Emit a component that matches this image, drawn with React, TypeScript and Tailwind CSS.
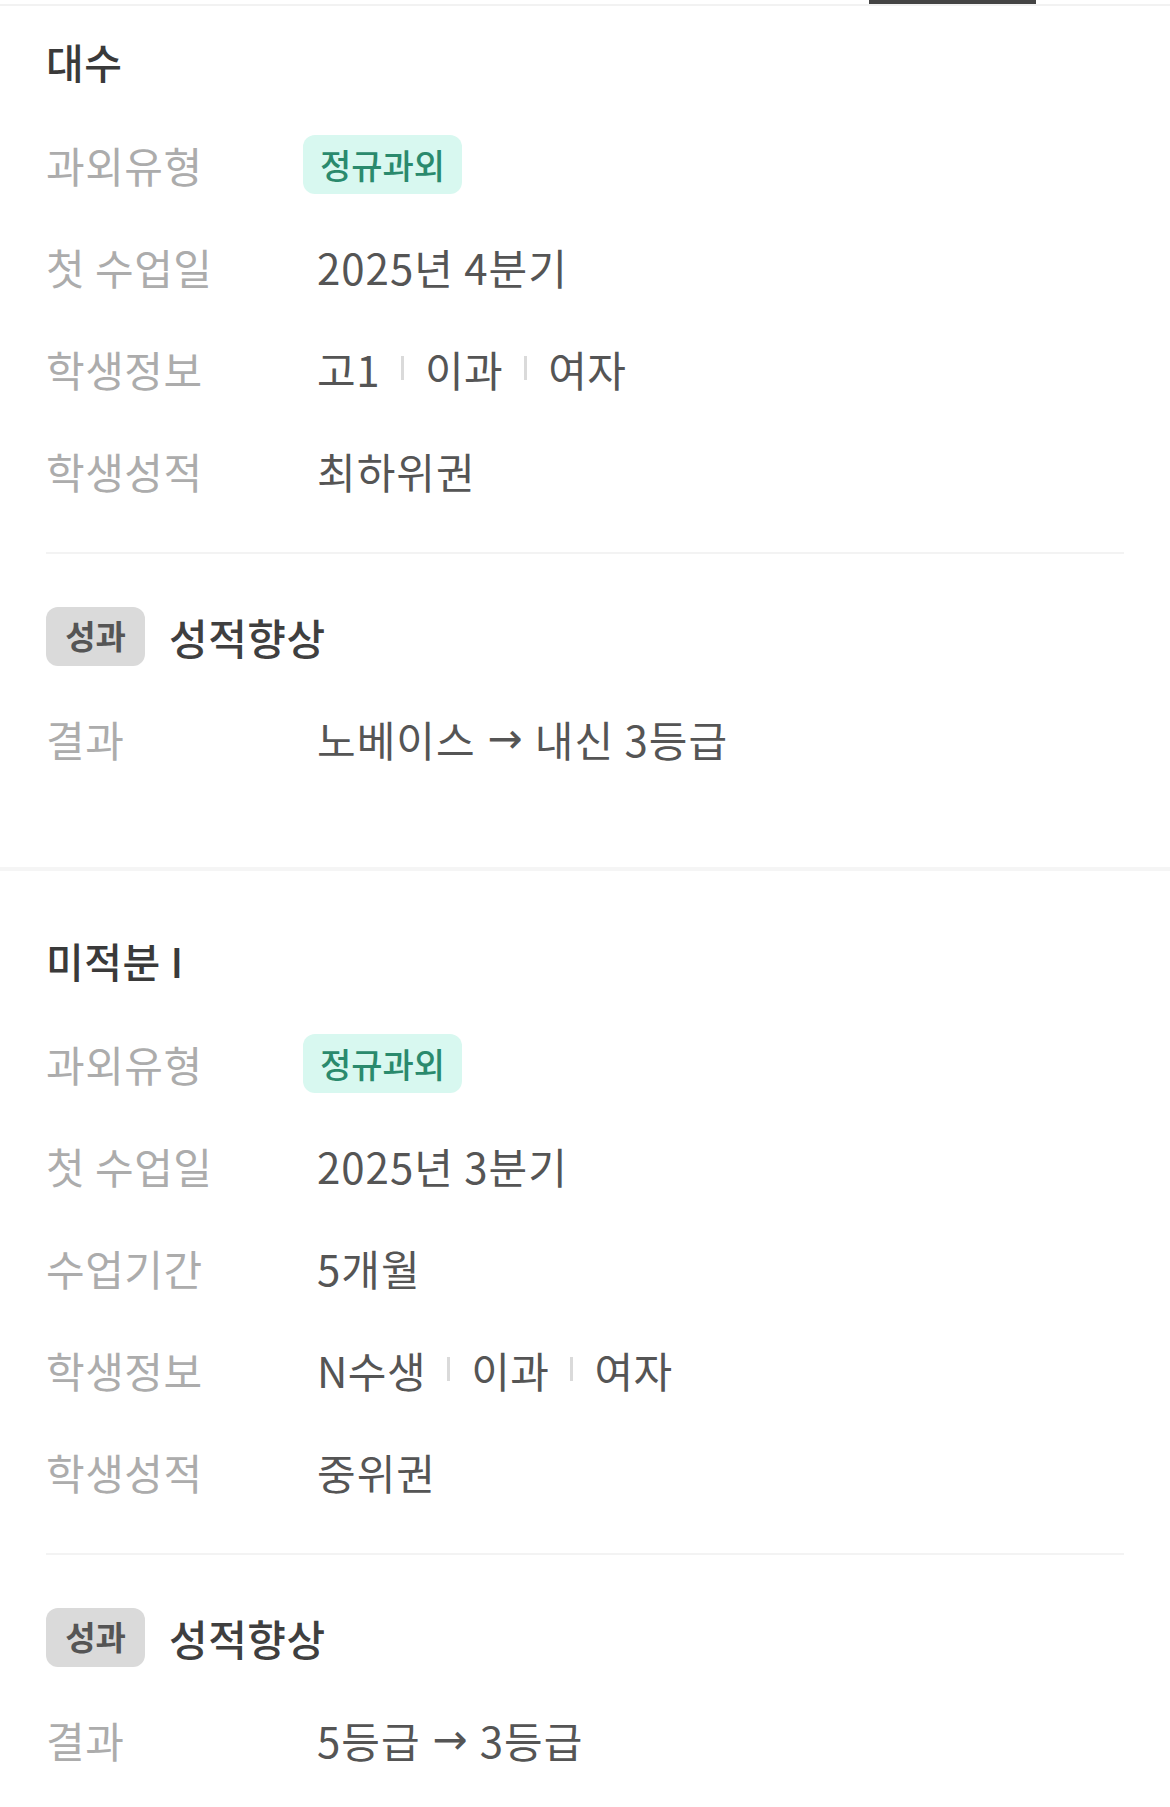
import { Fragment } from 'react';

type Row = { label: string; value?: string; parts?: string[]; badge?: string };

type Lesson = {
  subject: string;
  rows: Row[];
  outcome: string;
  from: string;
  to: string;
};

const lessons: Lesson[] = [
  {
    subject: '대수',
    rows: [
      { label: '과외유형', badge: '정규과외' },
      { label: '첫 수업일', value: '2025년 4분기' },
      { label: '학생정보', parts: ['고1', '이과', '여자'] },
      { label: '학생성적', value: '최하위권' },
    ],
    outcome: '성적향상',
    from: '노베이스',
    to: '내신 3등급',
  },
  {
    subject: '미적분 I',
    rows: [
      { label: '과외유형', badge: '정규과외' },
      { label: '첫 수업일', value: '2025년 3분기' },
      { label: '수업기간', value: '5개월' },
      { label: '학생정보', parts: ['N수생', '이과', '여자'] },
      { label: '학생성적', value: '중위권' },
    ],
    outcome: '성적향상',
    from: '5등급',
    to: '3등급',
  },
];

function InfoRow({ row }: { row: Row }) {
  return (
    <div className="flex h-[102px] items-center">
      <div className="w-[271px] shrink-0 text-[42px] tracking-[0.5px] text-[#acacac]">{row.label}</div>
      {row.badge && (
        <span className="ml-[-14px] flex h-[59px] items-center rounded-[12px] bg-[#d8f8f0] px-[17px] text-[34px] font-medium text-[#2a8a6d]">
          {row.badge}
        </span>
      )}
      {row.value && <div className="text-[42px] tracking-[1px] text-[#555555]">{row.value}</div>}
      {row.parts && (
        <div className="flex items-center text-[42px] tracking-[0.5px] text-[#555555]">
          {row.parts.map((p, i) => (
            <Fragment key={p}>
              {i > 0 && <span className="mx-[21px] h-[24px] w-[3px] bg-[#dadada]" />}
              <span>{p}</span>
            </Fragment>
          ))}
        </div>
      )}
    </div>
  );
}

function LessonCard({ lesson }: { lesson: Lesson }) {
  return (
    <section className="px-[46px]">
      <div className="flex h-[102px] items-center text-[41px] font-medium tracking-[0.5px] text-[#3a3a3a]">
        {lesson.subject}
      </div>
      {lesson.rows.map((r) => (
        <InfoRow key={r.label} row={r} />
      ))}
      <div className="mt-[31px] h-[2px] bg-[#f3f3f3]" />
      <div className="mt-[31px] flex h-[102px] items-center">
        <span className="flex h-[59px] w-[99px] items-center justify-center rounded-[12px] bg-[#dadada] text-[33px] font-bold text-[#555555]">
          성과
        </span>
        <span className="ml-[24px] text-[42px] font-medium tracking-[0.5px] text-[#3f3f3f]">{lesson.outcome}</span>
      </div>
      <div className="flex h-[102px] items-center">
        <div className="w-[271px] shrink-0 text-[42px] tracking-[0.5px] text-[#acacac]">결과</div>
        <div className="flex items-center text-[42px] tracking-[1px] text-[#555555]">
          <span>{lesson.from}</span>
          <span className="mx-[12px] font-['DejaVu_Sans',sans-serif] text-[42px] tracking-normal">→</span>
          <span>{lesson.to}</span>
        </div>
      </div>
    </section>
  );
}

export default function App() {
  return (
    <div
      className="min-h-[1807px] w-[1170px] bg-white"
      style={{ fontFamily: '"Noto Sans CJK KR", "Noto Sans", sans-serif' }}
    >
      {/* tab indicator */}
      <div className="h-[4px]">
        <div className="ml-[869px] h-[4px] w-[167px] bg-[#444444]" />
      </div>
      <div className="h-[2px] bg-[#f2f2f2]" />

      <div className="pt-[5px]">
        <LessonCard lesson={lessons[0]} />
      </div>
      <div className="mt-[78px] h-[4px] bg-[#f5f5f5]" />
      <div className="pt-[39px]">
        <LessonCard lesson={lessons[1]} />
      </div>
    </div>
  );
}
